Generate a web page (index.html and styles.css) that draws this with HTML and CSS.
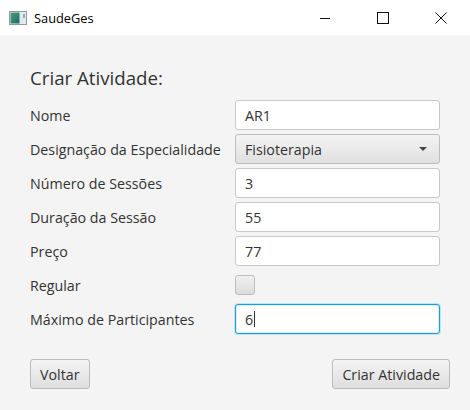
FILE: index.html
```html
<!DOCTYPE html>
<html>
<head>
<meta charset="utf-8">
<link rel="stylesheet" href="styles.css">
</head>
<body>
<div class="window">
  <div class="titlebar">
    <div class="app">
      <svg class="app-icon" width="18" height="14" viewBox="0 0 18 14">
        <defs>
          <linearGradient id="g1" x1="0" y1="0" x2="1" y2="1">
            <stop offset="0" stop-color="#5a8f86"/>
            <stop offset="0.5" stop-color="#2f8a6a"/>
            <stop offset="1" stop-color="#1f5f7a"/>
          </linearGradient>
        </defs>
        <rect x="0.5" y="0.5" width="17" height="13" fill="#e8eef0" stroke="#8e9aa0"/>
        <rect x="1.5" y="1.5" width="9" height="11" fill="url(#g1)"/>
        <rect x="11" y="1.5" width="6" height="11" fill="#dfe8ea"/>
        <rect x="14.5" y="3" width="1" height="4" fill="#55707a"/>
      </svg>
      <span class="app-name">SaudeGes</span>
    </div>
    <div class="controls">
      <span class="ctl"><svg width="12" height="12" viewBox="0 0 12 12"><line x1="1" y1="6.5" x2="11" y2="6.5" stroke="#111" stroke-width="1"/></svg></span>
      <span class="ctl"><svg width="12" height="12" viewBox="0 0 12 12"><rect x="0.5" y="0.5" width="11" height="11" fill="none" stroke="#111" stroke-width="1"/></svg></span>
      <span class="ctl"><svg width="12" height="12" viewBox="0 0 12 12"><path d="M0.5 0.5 L11.5 11.5 M11.5 0.5 L0.5 11.5" stroke="#111" stroke-width="1"/></svg></span>
    </div>
  </div>
  <div class="content">
    <h1 class="heading">Criar Atividade:</h1>
    <div class="form">
      <label class="lbl">Nome</label>
      <div class="field">AR1</div>

      <label class="lbl">Designação da Especialidade</label>
      <div class="combo"><span>Fisioterapia</span><span class="arrow"></span></div>

      <label class="lbl">Número de Sessões</label>
      <div class="field">3</div>

      <label class="lbl">Duração da Sessão</label>
      <div class="field">55</div>

      <label class="lbl">Preço</label>
      <div class="field">77</div>

      <label class="lbl">Regular</label>
      <div class="check-cell"><span class="checkbox"></span></div>

      <label class="lbl">Máximo de Participantes</label>
      <div class="field focused">6<span class="caret"></span></div>
    </div>
    <div class="actions">
      <button class="btn">Voltar</button>
      <button class="btn">Criar Atividade</button>
    </div>
  </div>
</div>
</body>
</html>
```
FILE: styles.css
```css
html, body {
  margin: 0;
  padding: 0;
}
body {
  width: 470px;
  height: 410px;
  overflow: hidden;
  font-family: "Open Sans", "Noto Sans", sans-serif;
  color: #333;
}
.window {
  width: 470px;
  height: 410px;
  display: flex;
  flex-direction: column;
  background: #f4f4f4;
}
.titlebar {
  height: 35px;
  background: #ffffff;
  display: flex;
  align-items: center;
  justify-content: space-between;
  flex: none;
}
.app {
  display: flex;
  align-items: center;
  padding-left: 9px;
}
.app-icon {
  display: block;
  margin-top: 1px;
}
.app-name {
  margin-left: 7px;
  font-size: 12.8px;
  color: #000;
}
.controls {
  display: flex;
  height: 35px;
}
.ctl {
  width: 58px;
  display: flex;
  align-items: center;
  justify-content: center;
}
.content {
  flex: 1;
  padding: 31px 20px 0 30px;
}
.heading {
  margin: 0;
  font-weight: normal;
  font-size: 18.7px;
  line-height: 24px;
  height: 34px;
  color: #333;
}
.form {
  display: grid;
  grid-template-columns: 205px 205px;
  grid-auto-rows: 30px;
  row-gap: 4px;
}
.lbl {
  display: flex;
  align-items: center;
  font-size: 14.25px;
  color: #333;
  white-space: nowrap;
}
.field {
  box-sizing: border-box;
  height: 30px;
  background: #fff;
  border: 1px solid #c9c9c9;
  border-radius: 3px;
  display: flex;
  align-items: center;
  padding-left: 9px;
  font-size: 14.25px;
  color: #333;
}
.field.focused {
  border: 1px solid #1f9bd6;
  box-shadow: 0 0 0 1px #bfe6f7, inset 0 0 0 1px #d9f1fb;
}
.caret {
  width: 1px;
  height: 16px;
  background: #333;
  margin-left: 1px;
}
.combo {
  box-sizing: border-box;
  height: 30px;
  border: 1px solid #bdbdbd;
  border-radius: 3px;
  background: linear-gradient(#f4f4f4, #e0e0e0);
  display: flex;
  align-items: center;
  justify-content: space-between;
  padding: 0 12px 0 9px;
  font-size: 14.25px;
  color: #333;
}
.arrow {
  width: 0;
  height: 0;
  border-left: 4px solid transparent;
  border-right: 4px solid transparent;
  border-top: 4px solid #444;
}
.check-cell {
  display: flex;
  align-items: center;
}
.checkbox {
  box-sizing: border-box;
  width: 20px;
  height: 20px;
  border: 1px solid #bdbdbd;
  border-radius: 3px;
  background: linear-gradient(#f0f0f0, #dcdcdc);
}
.actions {
  display: flex;
  justify-content: space-between;
  margin-top: 25px;
}
.btn {
  box-sizing: border-box;
  height: 30px;
  padding: 0 9px;
  border: 1px solid #bcbcbc;
  border-radius: 3px;
  background: linear-gradient(#f4f4f4, #dedede);
  font-family: "Open Sans", "Noto Sans", sans-serif;
  font-size: 14.25px;
  color: #333;
}
```
